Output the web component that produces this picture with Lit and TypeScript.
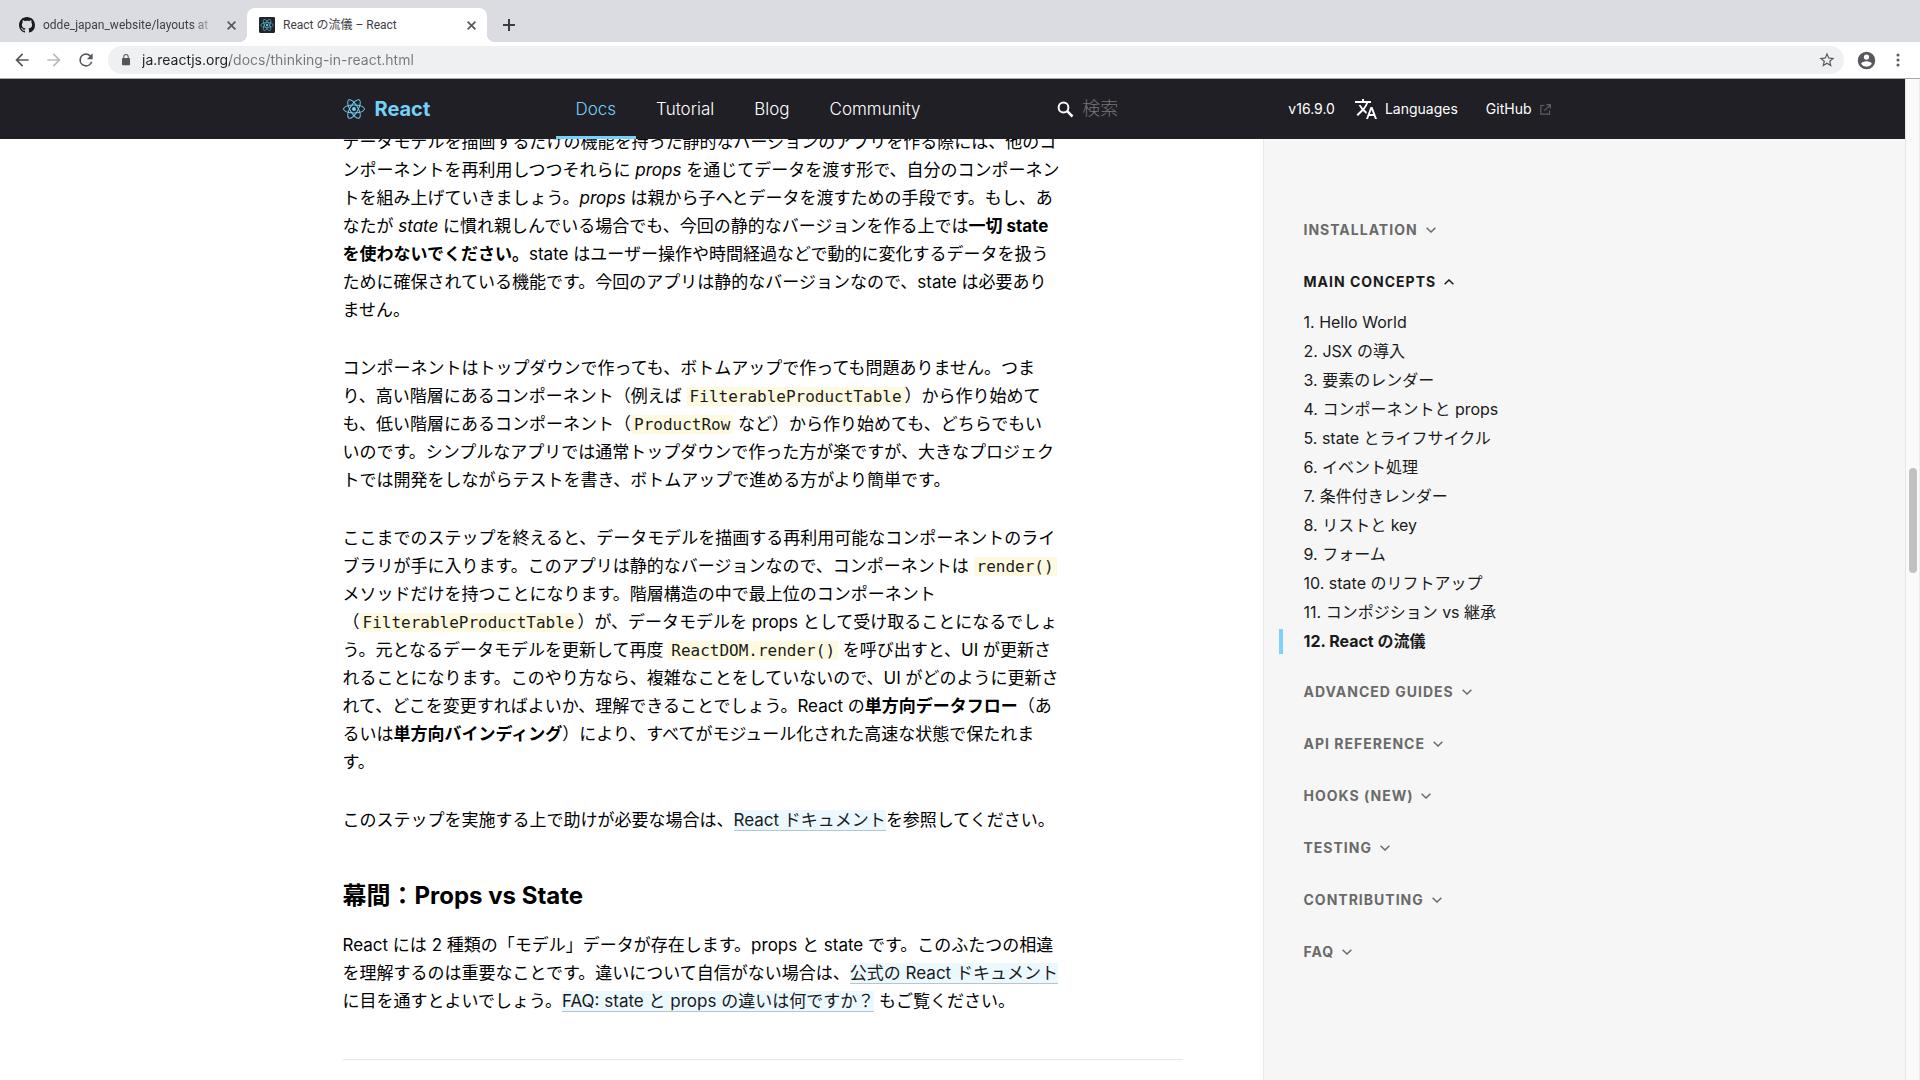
import { LitElement, html, svg, css, nothing } from "lit";
import { customElement, state } from "lit/decorators.js";
import { classMap } from "lit/directives/class-map.js";

const reactAtom = svg`
  <circle r="2.05" fill="currentColor"></circle>
  <g fill="none" stroke="currentColor" stroke-width="1">
    <ellipse rx="11" ry="4.2"></ellipse>
    <ellipse rx="11" ry="4.2" transform="rotate(60)"></ellipse>
    <ellipse rx="11" ry="4.2" transform="rotate(120)"></ellipse>
  </g>`;

const closeIcon = html`<svg width="9" height="9" viewBox="0 0 9 9" aria-hidden="true">
  <path d="M.6.6l7.800 7.800M8.400.6L.6 8.400" stroke="currentColor" stroke-width="1.600" fill="none"></path>
</svg>`;

@customElement("browser-chrome")
class BrowserChrome extends LitElement {
  static styles = css`
    :host {
      display: block;
      font-family: Inter, "Noto Sans CJK JP", sans-serif;
      border-bottom: 1px solid #a9a9ad;
    }
    button {
      border: 0;
      padding: 0;
      background: none;
      color: inherit;
      display: flex;
      align-items: center;
      justify-content: center;
    }
    .strip {
      display: flex;
      height: 42px;
      padding: 8px 7px 0;
      box-sizing: border-box;
      background: #dbdce1;
    }
    .tab {
      display: flex;
      align-items: center;
      width: 240px;
      padding: 0 10px 0 12px;
      box-sizing: border-box;
      gap: 8px;
      color: #3f4045;
      font: 12px/16px Roboto, "Noto Sans CJK JP", sans-serif;
      position: relative;
    }
    .tab.active {
      background: #fff;
      border-radius: 8px 8px 0 0;
    }
    .tab.active::before,
    .tab.active::after {
      content: "";
      position: absolute;
      bottom: 0;
      width: 8px;
      height: 8px;
    }
    .tab.active::before {
      left: -8px;
      background: radial-gradient(circle at 0 0, transparent 8px, #fff 8px);
    }
    .tab.active::after {
      right: -8px;
      background: radial-gradient(circle at 100% 0, transparent 8px, #fff 8px);
    }
    .title {
      flex: 1;
      overflow: hidden;
      white-space: nowrap;
    }
    .title.faded {
      mask-image: linear-gradient(90deg, #000 85%, transparent);
    }
    .icon {
      flex: none;
    }
    .close {
      width: 12px;
      height: 16px;
      color: #55565b;
    }
    .new-tab {
      width: 28px;
      margin-left: 8px;
      color: #3c3d42;
    }
    .toolbar {
      display: flex;
      align-items: center;
      height: 36px;
      padding: 0 8px;
      gap: 4px;
      background: #fff;
      color: #57585f;
    }
    .tool {
      width: 28px;
      height: 28px;
    }
    .tool.off {
      color: #b9babd;
    }
    .address {
      display: flex;
      align-items: center;
      flex: 1;
      height: 28px;
      margin: 0 4px;
      padding: 0 8px 0 14px;
      border-radius: 14px;
      background: #eff0f2;
      gap: 12px;
    }
    .url {
      flex: 1;
      min-width: 0;
      border: 0;
      padding: 0;
      outline: 0;
      font: 14px/20px Inter, sans-serif;
      color: transparent;
      background: linear-gradient(90deg, #202124 88px, #76777c 88px);
      -webkit-background-clip: text;
      background-clip: text;
    }
    .menu {
      width: 28px;
      height: 28px;
    }
  `;

  render() {
    return html`
      <div class="strip">
        <div class="tab">
          <svg class="icon" width="16" height="16" viewBox="0 0 16 16" fill="#1b1b1f" aria-hidden="true">
            <path d="M8 0C3.58 0 0 3.58 0 8c0 3.54 2.29 6.53 5.47 7.59.4.07.55-.17.55-.38 0-.19-.01-.82-.01-1.49-2.01.37-2.53-.49-2.69-.94-.09-.23-.48-.94-.82-1.13-.28-.15-.68-.52-.01-.53.63-.01 1.08.58 1.23.82.72 1.21 1.87.87 2.33.66.07-.52.28-.87.51-1.07-1.78-.2-3.64-.89-3.64-3.95 0-.87.31-1.59.82-2.15-.08-.2-.36-1.02.08-2.12 0 0 .67-.21 2.2.82.64-.18 1.32-.27 2-.27s1.36.09 2 .27c1.53-1.04 2.2-.82 2.2-.82.44 1.1.16 1.92.08 2.12.51.56.82 1.27.82 2.15 0 3.07-1.87 3.75-3.65 3.95.29.25.54.73.54 1.48 0 1.07-.01 1.93-.01 2.2 0 .21.15.46.55.38A8.01 8.01 0 0 0 16 8c0-4.42-3.58-8-8-8z"></path>
          </svg>
          <span class="title faded">odde_japan_website/layouts at</span>
          <button class="close" aria-label="Close tab">${closeIcon}</button>
        </div>
        <div class="tab active">
          <svg class="icon" width="16" height="16" viewBox="-14 -14 28 28" color="#61c5e8" aria-hidden="true">
            <rect x="-14" y="-14" width="28" height="28" rx="2" fill="#222428"></rect>
            ${reactAtom}
          </svg>
          <span class="title">React の流儀 – React</span>
          <button class="close" aria-label="Close tab">${closeIcon}</button>
        </div>
        <button class="new-tab" aria-label="New tab">
          <svg width="12" height="12" viewBox="0 0 12 12" aria-hidden="true">
            <path d="M6 0v12M0 6h12" stroke="currentColor" stroke-width="2"></path>
          </svg>
        </button>
      </div>
      <div class="toolbar">
        <button class="tool" aria-label="Back">
          <svg width="20" height="20" viewBox="0 0 24 24" fill="currentColor" aria-hidden="true">
            <path d="M20 11H7.83l5.59-5.59L12 4l-8 8 8 8 1.41-1.41L7.83 13H20v-2z"></path>
          </svg>
        </button>
        <button class="tool off" aria-label="Forward">
          <svg width="20" height="20" viewBox="0 0 24 24" fill="currentColor" aria-hidden="true">
            <path d="M12 4l-1.41 1.41L16.17 11H4v2h12.17l-5.58 5.59L12 20l8-8z"></path>
          </svg>
        </button>
        <button class="tool" aria-label="Reload">
          <svg width="20" height="20" viewBox="0 0 24 24" fill="currentColor" aria-hidden="true">
            <path d="M17.65 6.35A7.96 7.96 0 0 0 12 4a8 8 0 1 0 7.73 10h-2.08A6 6 0 1 1 12 6c1.66 0 3.14.69 4.22 1.78L13 11h7V4l-2.35 2.35z"></path>
          </svg>
        </button>
        <div class="address">
          <svg width="8" height="12" viewBox="0 0 8 12" fill="#54555b" aria-hidden="true">
            <path d="M7.200 4H6.700V2.800a2.700 2.700 0 0 0-5.400 0V4H.8a.8.8 0 0 0-.8.8v5.700a.8.8 0 0 0 .8.8h6.400a.8.8 0 0 0 .8-.8V4.800a.8.8 0 0 0-.8-.8zM2.300 4V2.800a1.700 1.700 0 0 1 3.400 0V4z"></path>
          </svg>
          <input class="url" type="text" aria-label="Address" .value=${"ja.reactjs.org/docs/thinking-in-react.html"} />
          <button aria-label="Bookmark this page">
            <svg width="18" height="18" viewBox="0 0 24 24" fill="currentColor" aria-hidden="true">
              <path d="M22 9.240l-7.190-.62L12 2 9.190 8.630 2 9.240l5.460 4.730L5.820 21 12 17.270 18.180 21l-1.630-7.030L22 9.240zM12 15.400l-3.760 2.270 1-4.280-3.320-2.880 4.380-.38L12 6.100l1.710 4.040 4.380.38-3.320 2.880 1 4.280L12 15.400z"></path>
            </svg>
          </button>
        </div>
        <button class="tool" aria-label="Profile">
          <svg width="21" height="21" viewBox="0 0 24 24" fill="currentColor" aria-hidden="true">
            <path d="M12 2a10 10 0 1 0 0 20 10 10 0 0 0 0-20zm0 3a3 3 0 1 1 0 6 3 3 0 0 1 0-6zm0 14.200a7.200 7.200 0 0 1-6-3.220c.03-1.990 4-3.080 6-3.080s5.970 1.090 6 3.080a7.200 7.200 0 0 1-6 3.220z"></path>
          </svg>
        </button>
        <button class="menu" aria-label="Menu">
          <svg width="4" height="14" viewBox="0 0 4 14" fill="currentColor" aria-hidden="true">
            <circle cx="2" cy="2" r="1.500"></circle>
            <circle cx="2" cy="7" r="1.500"></circle>
            <circle cx="2" cy="12" r="1.500"></circle>
          </svg>
        </button>
      </div>
    `;
  }
}

@customElement("site-header")
class SiteHeader extends LitElement {
  static styles = css`
    :host {
      display: block;
      background: #201f25;
      color: #fff;
      position: relative;
      z-index: 1;
      font-family: Inter, "Noto Sans CJK JP", sans-serif;
    }
    a {
      color: inherit;
      text-decoration: none;
    }
    .inner {
      display: flex;
      align-items: center;
      height: 60px;
      max-width: 1220px;
      margin: 0 auto;
    }
    .brand {
      display: flex;
      align-items: center;
      gap: 10px;
      width: 213px;
      color: #74d2fa;
      font-size: 20px;
      font-weight: 700;
    }
    .nav {
      display: flex;
      flex: 1;
      height: 100%;
      font-size: 17px;
      font-weight: 300;
    }
    .nav a {
      display: flex;
      align-items: center;
      padding: 0 20px;
      position: relative;
    }
    .nav a.current {
      color: #74d2fa;
    }
    .nav a.current::after {
      content: "";
      position: absolute;
      left: 0;
      right: 0;
      bottom: 0;
      height: 3px;
      background: #74d2fa;
    }
    .search {
      display: flex;
      align-items: center;
      gap: 8px;
      width: 231px;
    }
    .query {
      flex: 1;
      min-width: 0;
      border: 0;
      padding: 0;
      outline: 0;
      background: none;
      color: #fff;
      font: 300 18px/24px Inter, "Noto Sans CJK JP", sans-serif;
    }
    .query::placeholder {
      color: #77767b;
      opacity: 1;
    }
    .links {
      display: flex;
      align-items: center;
      font-size: 14px;
      line-height: 20px;
      padding-right: 12px;
    }
    .link {
      display: flex;
      align-items: center;
      gap: 8px;
    }
    .version {
      margin-right: 20px;
    }
    .languages {
      margin-right: 28px;
    }
    .out {
      color: #5f5e63;
    }
  `;

  private items = ["Docs", "Tutorial", "Blog", "Community"];

  render() {
    return html`
      <div class="inner">
        <a class="brand" href="/">
          <svg width="22" height="22" viewBox="-11.500 -11.500 23 23" aria-hidden="true">${reactAtom}</svg>
          React
        </a>
        <nav class="nav">
          ${this.items.map(
            (item, i) => html`<a class=${classMap({ current: i === 0 })} href="#${item.toLowerCase()}">${item}</a>`
          )}
        </nav>
        <label class="search">
          <svg width="17" height="17" viewBox="0 0 17 17" fill="none" stroke="#fff" aria-hidden="true">
            <circle cx="6.500" cy="6.500" r="4.900" stroke-width="2"></circle>
            <path d="M10.200 10.200l5.300 5.300" stroke-width="2.500"></path>
          </svg>
          <input class="query" type="search" placeholder="検索" aria-label="検索" />
        </label>
        <div class="links">
          <a class="version" href="#versions">v16.9.0</a>
          <a class="link languages" href="#languages">
            <svg width="22" height="22" viewBox="1 1 22 22" fill="#fff" aria-hidden="true">
              <path d="M12.870 15.070l-2.540-2.510.03-.03A17.520 17.520 0 0 0 14.070 6H17V4h-7V2H8v2H1v2h11.170C11.500 7.920 10.440 9.750 9 11.350 8.070 10.320 7.300 9.190 6.690 8h-2c.73 1.630 1.730 3.170 2.980 4.560l-5.090 5.020L4 19l5-5 3.110 3.110.76-2.040zM18.500 10h-2L12 22h2l1.120-3h4.750L21 22h2l-4.500-12zm-2.620 7l1.620-4.330L19.120 17h-3.240z"></path>
            </svg>
            Languages
          </a>
          <a class="link" href="#github">
            GitHub
            <svg class="out" width="11" height="11" viewBox="0 0 11 11" fill="none" stroke="currentColor" aria-hidden="true">
              <path d="M4.500 1.500H.8v8.700h8.700V6.500M6.500.7h3.800v3.800M10.200.8L4.300 6.700" stroke-width="1.200"></path>
            </svg>
          </a>
        </div>
      </div>
    `;
  }
}

@customElement("docs-article")
class DocsArticle extends LitElement {
  static styles = css`
    :host {
      display: block;
      color: #000;
      font: 17px/28px Inter, "Noto Sans CJK JP", sans-serif;
      text-spacing-trim: space-all;
    }
    .scrolled {
      margin-top: -11px;
      padding-right: 80px;
    }
    p {
      margin: 0 0 30px;
      white-space: nowrap;
    }
    strong {
      font-weight: 700;
    }
    h3 {
      margin: 44px 0 17px;
      font-size: 24px;
      font-weight: 700;
      line-height: 36px;
    }
    code {
      font: 16px "DejaVu Sans Mono", monospace;
      color: #1a1a1a;
      background: #fdfae1;
      padding: 0 3px;
    }
    a {
      color: #1a1a1a;
      text-decoration: none;
      background: #ebf8fe;
      border-bottom: 1px solid #b5c6cf;
    }
    hr {
      margin: 44px 0 0;
      border: 0;
      height: 1px;
      background: #e6e6e6;
    }
  `;

  render() {
    return html`
      <div class="scrolled">
        <p>
          データモデルを描画するだけの機能を持った静的なバージョンのアプリを作る際には、他のコ<br />ンポーネントを再利用しつつそれらに <em>props</em> を通じてデータを渡す形で、自分のコンポーネン<br />トを組み上げていきましょう。<em>props</em> は親から子へとデータを渡すための手段です。もし、あ<br />なたが <em>state</em> に慣れ親しんでいる場合でも、今回の静的なバージョンを作る上では<strong>一切 state<br />を使わないでください。</strong>state はユーザー操作や時間経過などで動的に変化するデータを扱う<br />ために確保されている機能です。今回のアプリは静的なバージョンなので、state は必要あり<br />ません。
        </p>
        <p>
          コンポーネントはトップダウンで作っても、ボトムアップで作っても問題ありません。つま<br />り、高い階層にあるコンポーネント（例えば <code>FilterableProductTable</code>）から作り始めて<br />も、低い階層にあるコンポーネント（<code>ProductRow</code> など）から作り始めても、どちらでもい<br />いのです。シンプルなアプリでは通常トップダウンで作った方が楽ですが、大きなプロジェク<br />トでは開発をしながらテストを書き、ボトムアップで進める方がより簡単です。
        </p>
        <p>
          ここまでのステップを終えると、データモデルを描画する再利用可能なコンポーネントのライ<br />ブラリが手に入ります。このアプリは静的なバージョンなので、コンポーネントは <code>render()</code><br />メソッドだけを持つことになります。階層構造の中で最上位のコンポーネント<br />（<code>FilterableProductTable</code>）が、データモデルを props として受け取ることになるでしょ<br />う。元となるデータモデルを更新して再度 <code>ReactDOM.render()</code> を呼び出すと、UI が更新さ<br />れることになります。このやり方なら、複雑なことをしていないので、UI がどのように更新さ<br />れて、どこを変更すればよいか、理解できることでしょう。React の<strong>単方向データフロー</strong>（あ<br />るいは<strong>単方向バインディング</strong>）により、すべてがモジュール化された高速な状態で保たれま<br />す。
        </p>
        <p>このステップを実施する上で助けが必要な場合は、<a href="#docs">React ドキュメント</a>を参照してください。</p>
        <h3>幕間：Props vs State</h3>
        <p>
          React には 2 種類の「モデル」データが存在します。props と state です。このふたつの相違<br />を理解するのは重要なことです。違いについて自信がない場合は、<a href="#state">公式の React ドキュメント</a><br />に目を通すとよいでしょう。<a href="#faq">FAQ: state と props の違いは何ですか？</a> もご覧ください。
        </p>
        <hr />
      </div>
    `;
  }
}

interface Section {
  title: string;
  items?: string[];
}

@customElement("docs-sidebar")
class DocsSidebar extends LitElement {
  static styles = css`
    :host {
      display: block;
      box-sizing: border-box;
      background: #f6f6f6;
      border-left: 1px solid #e9e9e9;
      padding: 77px 0 0 40px;
      font-family: Inter, "Noto Sans CJK JP", sans-serif;
      color: #1a1a1a;
    }
    .section {
      margin-bottom: 24px;
    }
    .toggle {
      display: flex;
      align-items: center;
      gap: 8px;
      height: 28px;
      border: 0;
      padding: 0;
      background: none;
      font: 700 14px/20px Inter, sans-serif;
      letter-spacing: 1px;
      text-transform: uppercase;
      color: #6a6a6a;
    }
    .toggle.open {
      color: #1a1a1a;
    }
    ol {
      list-style: none;
      margin: 14px 0 0;
      padding: 0;
      font-size: 16px;
      line-height: 25px;
    }
    li {
      margin-bottom: 4px;
    }
    li a {
      color: inherit;
      text-decoration: none;
      display: block;
      position: relative;
    }
    li a.current {
      font-weight: 700;
    }
    li a.current::before {
      content: "";
      position: absolute;
      left: -25px;
      top: 0;
      width: 4px;
      height: 25px;
      background: #7cd3fa;
    }
  `;

  @state() private open = "Main Concepts";

  private sections: Section[] = [
    { title: "Installation" },
    {
      title: "Main Concepts",
      items: [
        "Hello World",
        "JSX の導入",
        "要素のレンダー",
        "コンポーネントと props",
        "state とライフサイクル",
        "イベント処理",
        "条件付きレンダー",
        "リストと key",
        "フォーム",
        "state のリフトアップ",
        "コンポジション vs 継承",
        "React の流儀",
      ],
    },
    { title: "Advanced Guides" },
    { title: "API Reference" },
    { title: "Hooks (New)" },
    { title: "Testing" },
    { title: "Contributing" },
    { title: "FAQ" },
  ];

  private toggle(title: string) {
    this.open = this.open === title ? "" : title;
  }

  render() {
    return html`<nav>
      ${this.sections.map((s) => {
        const open = s.title === this.open;
        return html`<div class="section">
          <button class=${classMap({ toggle: true, open })} aria-expanded=${open} @click=${() => this.toggle(s.title)}>
            ${s.title}
            <svg width="10" height="6" viewBox="0 0 10 6" fill="none" stroke="currentColor" aria-hidden="true">
              <path d=${open ? "M.6 5.300L5 1l4.400 4.300" : "M.6.7L5 5 9.400.7"} stroke-width="1.500"></path>
            </svg>
          </button>
          ${open && s.items
            ? html`<ol>
                ${s.items.map(
                  (item, i) => html`<li>
                    <a class=${classMap({ current: i === s.items!.length - 1 })} href="#${i + 1}">${i + 1}. ${item}</a>
                  </li>`
                )}
              </ol>`
            : nothing}
        </div>`;
      })}
    </nav>`;
  }
}

@customElement("app-root")
class AppRoot extends LitElement {
  static styles = css`
    :host {
      display: flex;
      flex-direction: column;
      height: 100vh;
      overflow: hidden;
      background: #fff;
    }
    .viewport {
      display: flex;
      flex: 1;
      min-height: 0;
    }
    .page {
      display: flex;
      flex-direction: column;
      flex: 1;
      min-width: 0;
    }
    .content {
      display: grid;
      grid-template-columns: 1fr minmax(0, 920px) 300px 1fr;
      flex: 1;
      min-height: 0;
      overflow: hidden;
    }
    .article {
      grid-column: 2;
    }
    .sidebar {
      grid-column: 3 / 5;
    }
    .track {
      width: 15px;
      box-sizing: border-box;
      background: #fafafa;
      border-left: 1px solid #e6e6e6;
      border-right: 1px solid #ececec;
      position: relative;
    }
    .thumb {
      position: absolute;
      top: 38.9%;
      height: 10.5%;
      left: 3px;
      right: 2px;
      border-radius: 4px;
      background: #c1c1c1;
    }
  `;

  render() {
    return html`
      <browser-chrome></browser-chrome>
      <div class="viewport">
        <div class="page">
          <site-header></site-header>
          <div class="content">
            <docs-article class="article"></docs-article>
            <docs-sidebar class="sidebar"></docs-sidebar>
          </div>
        </div>
        <div class="track"><div class="thumb"></div></div>
      </div>
    `;
  }
}
